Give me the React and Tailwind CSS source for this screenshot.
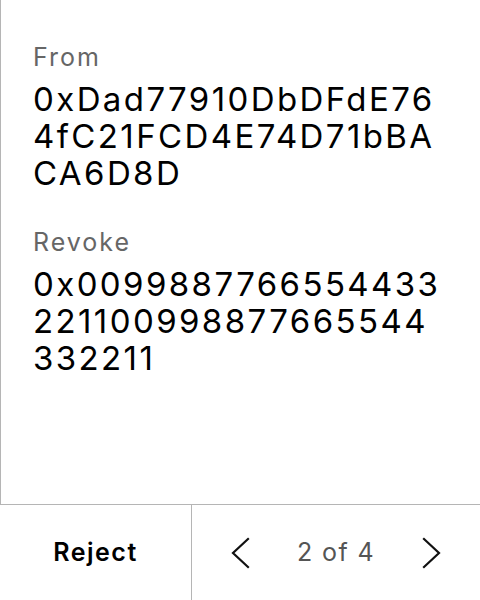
import React from 'react';

const fields = [
    { label: 'From', value: '0xDad77910DbDFdE764fC21FCD4E74D71bBACA6D8D' },
    { label: 'Revoke', value: '0x0099887766554433221100998877665544332211' },
];

const Chevron = ({ dir }) => (
    <svg width="20" height="32" viewBox="0 0 20 32" fill="none" stroke="#111" strokeWidth="2.2" strokeLinecap="square">
        {dir === 'left'
            ? <polyline points="17,2 2,16 17,30" />
            : <polyline points="3,2 18,16 3,30" />}
    </svg>
);

export default function App() {
    return (
        <div className="h-[600px] w-[480px] flex flex-col bg-white text-black" style={{ fontFamily: 'Inter, "Noto Sans", sans-serif' }}>
            <div className="flex-1 border-l border-[#b5b5b5] px-8 pt-[41px]">
                {fields.map((f, i) => (
                    <div key={f.label} className={i > 0 ? 'mt-[34px]' : ''}>
                        <div className="text-[25px] leading-[32px] tracking-[2px] text-[#666666]">{f.label}</div>
                        <div className="mt-2 text-[33px] leading-[37px] tracking-[2.4px] break-all">{f.value}</div>
                    </div>
                ))}
            </div>
            <div className="h-[96px] border-t border-[#b5b5b5] flex">
                <button className="w-[192px] border-r border-[#b5b5b5] flex items-center justify-center text-[25px] tracking-[1.5px] font-semibold">
                    Reject
                </button>
                <div className="flex-1 flex items-center justify-center gap-[46px]">
                    <Chevron dir="left" />
                    <span className="text-[25px] tracking-[1.4px] text-[#555555]">2 of 4</span>
                    <Chevron dir="right" />
                </div>
            </div>
        </div>
    );
}
